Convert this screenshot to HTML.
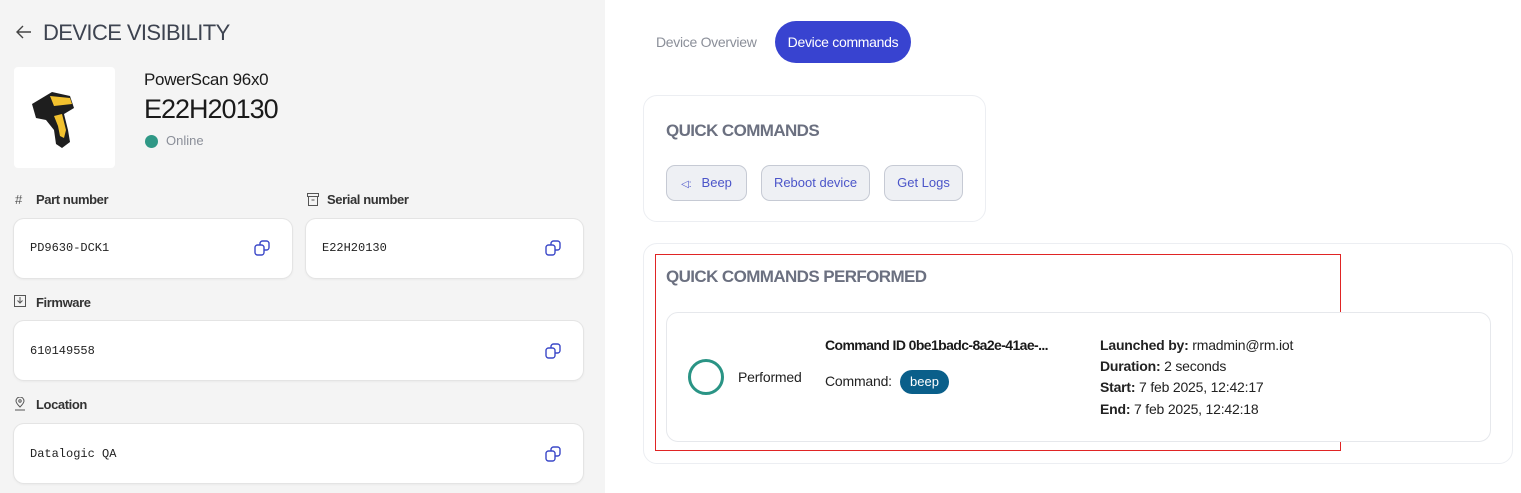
<!DOCTYPE html>
<html><head><meta charset="utf-8"><style>
*{margin:0;padding:0;box-sizing:border-box}
body{width:1521px;height:493px;overflow:hidden;background:#fff;font-family:"Liberation Sans",sans-serif;position:relative}
.a{position:absolute;white-space:nowrap}
#left{position:absolute;left:0;top:0;width:605px;height:493px;background:#f4f4f4}
.box{position:absolute;background:#fff;border-radius:10px;box-shadow:0 0 0 1px #e4e4e4,0 1px 3px rgba(0,0,0,.08)}
.mono{font-family:"Liberation Mono",monospace;font-size:12px;color:#222}
.lbl{font-size:13px;color:#333;font-weight:bold;letter-spacing:-.4px}
.card{position:absolute;background:#fff;border:1px solid #eceef2;border-radius:14px}
.btn{position:absolute;top:165px;height:36px;background:#eef0f4;border:1px solid #c6cad4;border-radius:9px;color:#4b55c9;font-size:13px;line-height:34px;text-align:center}
.r{font-size:14px;color:#222;letter-spacing:-.2px}
.r b{color:#222}
.h{font-size:17px;color:#6b7080;font-weight:bold;letter-spacing:-.6px}
</style></head><body>
<div id="left">
<svg class="a" style="left:16px;top:25px" width="16" height="14" viewBox="0 0 16 14"><path d="M7 1L1 7l6 6M1 7h14" fill="none" stroke="#444" stroke-width="1.4"/></svg>
<div class="a" style="left:43px;top:20px;font-size:22px;color:#3d4350;letter-spacing:-.6px">DEVICE VISIBILITY</div>
<div class="a" style="left:14px;top:67px;width:101px;height:101px;background:#fff;border-radius:4px"></div>
<svg class="a" style="left:30px;top:86px" width="50" height="66" viewBox="0 0 50 66"><path d="M2 18L22 6 40 10 44 22 34 28 38 44 40 56 32 62 26 58 24 44 16 34 6 32Z" fill="#1e1e1e"/><path d="M20 10L40 12 42 18 24 20Z" fill="#f2c12e"/><path d="M24 30L32 28 36 44 34 52 30 50 28 40Z" fill="#f2c12e"/></svg>
<div class="a" style="left:144px;top:70px;font-size:17px;color:#1a1a1a;letter-spacing:-.3px">PowerScan 96x0</div>
<div class="a" style="left:144px;top:94px;font-size:27px;color:#1a1a1a;letter-spacing:-1px">E22H20130</div>
<div class="a" style="left:145px;top:135px;width:13px;height:13px;border-radius:50%;background:#2f9886"></div>
<div class="a" style="left:166px;top:133px;font-size:13px;color:#8b8f99">Online</div>
<div class="a" style="left:15px;top:192px;font-size:13px;color:#555">#</div>
<div class="a lbl" style="left:36px;top:192px">Part number</div>
<svg class="a" style="left:307px;top:193px" width="12" height="13" viewBox="0 0 12 13"><rect x=".5" y=".5" width="11" height="3" fill="none" stroke="#555"/><rect x="1.5" y="3.5" width="9" height="9" fill="none" stroke="#555"/><path d="M4.5 7h3" stroke="#555"/></svg>
<div class="a lbl" style="left:327px;top:192px">Serial number</div>
<div class="box" style="left:14px;top:219px;width:278px;height:59px"></div>
<div class="box" style="left:306px;top:219px;width:277px;height:59px"></div>
<div class="a mono" style="left:30px;top:241px">PD9630-DCK1</div>
<div class="a mono" style="left:322px;top:241px">E22H20130</div>
<svg class="a" style="left:14px;top:295px" width="12" height="12" viewBox="0 0 12 12"><rect x=".5" y=".5" width="11" height="11" fill="none" stroke="#555"/><path d="M6 2v6M3.5 5.5L6 8l2.5-2.5" fill="none" stroke="#555"/></svg>
<div class="a lbl" style="left:36px;top:295px">Firmware</div>
<div class="box" style="left:14px;top:321px;width:569px;height:59px"></div>
<div class="a mono" style="left:30px;top:344px">610149558</div>
<svg class="a" style="left:14px;top:397px" width="12" height="14" viewBox="0 0 12 14"><path d="M6 10C3 7 2 5.5 2 4a4 4 0 018 0c0 1.5-1 3-4 6z" fill="none" stroke="#555"/><circle cx="6" cy="4" r="1.2" fill="none" stroke="#555"/><path d="M1 13h10" stroke="#555"/></svg>
<div class="a lbl" style="left:36px;top:397px">Location</div>
<div class="box" style="left:14px;top:424px;width:569px;height:59px"></div>
<div class="a mono" style="left:30px;top:447px">Datalogic QA</div>
<svg class="a" style="left:254px;top:240px" width="16" height="16" viewBox="0 0 16 16"><rect x="6" y="1" width="9" height="9" rx="2.5" fill="none" stroke="#3b48c8" stroke-width="1.4"/><rect x="1" y="5" width="9" height="10" rx="2.5" fill="#fff" stroke="#3b48c8" stroke-width="1.4"/></svg>
<svg class="a" style="left:545px;top:240px" width="16" height="16" viewBox="0 0 16 16"><rect x="6" y="1" width="9" height="9" rx="2.5" fill="none" stroke="#3b48c8" stroke-width="1.4"/><rect x="1" y="5" width="9" height="10" rx="2.5" fill="#fff" stroke="#3b48c8" stroke-width="1.4"/></svg>
<svg class="a" style="left:545px;top:343px" width="16" height="16" viewBox="0 0 16 16"><rect x="6" y="1" width="9" height="9" rx="2.5" fill="none" stroke="#3b48c8" stroke-width="1.4"/><rect x="1" y="5" width="9" height="10" rx="2.5" fill="#fff" stroke="#3b48c8" stroke-width="1.4"/></svg>
<svg class="a" style="left:545px;top:446px" width="16" height="16" viewBox="0 0 16 16"><rect x="6" y="1" width="9" height="9" rx="2.5" fill="none" stroke="#3b48c8" stroke-width="1.4"/><rect x="1" y="5" width="9" height="10" rx="2.5" fill="#fff" stroke="#3b48c8" stroke-width="1.4"/></svg>
</div>

<div class="a" style="left:656px;top:34px;font-size:14px;color:#8b8f99;letter-spacing:-.3px">Device Overview</div>
<div class="a" style="left:775px;top:21px;width:136px;height:42px;border-radius:21px;background:#3843d0;color:#fff;font-size:14px;line-height:42px;text-align:center;letter-spacing:-.3px">Device commands</div>

<div class="card" style="left:643px;top:95px;width:343px;height:127px"></div>
<div class="a h" style="left:666px;top:121px">QUICK COMMANDS</div>
<div class="btn" style="left:666px;width:81px"><span style="font-size:10px;margin-right:10px">◁︎:</span>Beep</div>
<div class="btn" style="left:761px;width:109px">Reboot device</div>
<div class="btn" style="left:884px;width:79px">Get Logs</div>

<div class="card" style="left:643px;top:243px;width:870px;height:221px"></div>
<div class="a" style="left:655px;top:254px;width:686px;height:197px;border:1.5px solid #e02424"></div>
<div class="a h" style="left:666px;top:267px">QUICK COMMANDS PERFORMED</div>
<div class="card" style="left:666px;top:312px;width:825px;height:130px;border-radius:12px;border-color:#e6e8ec"></div>
<div class="a" style="left:688px;top:359px;width:36px;height:36px;border-radius:50%;border:3px solid #2a9485"></div>
<div class="a r" style="left:738px;top:369px">Performed</div>
<div class="a" style="left:825px;top:337px;font-size:14px;font-weight:bold;color:#1a1a1a;letter-spacing:-.6px">Command ID 0be1badc-8a2e-41ae-...</div>
<div class="a r" style="left:825px;top:373px">Command:</div>
<div class="a" style="left:900px;top:370px;width:49px;height:24px;border-radius:12px;background:#0a5f8a;color:#fff;font-size:13px;line-height:24px;text-align:center">beep</div>
<div class="a r" style="left:1100px;top:337px"><b>Launched by:</b> rmadmin@rm.iot</div>
<div class="a r" style="left:1100px;top:358px"><b>Duration:</b> 2 seconds</div>
<div class="a r" style="left:1100px;top:379px"><b>Start:</b> 7 feb 2025, 12:42:17</div>
<div class="a r" style="left:1100px;top:401px"><b>End:</b> 7 feb 2025, 12:42:18</div>
</body></html>
